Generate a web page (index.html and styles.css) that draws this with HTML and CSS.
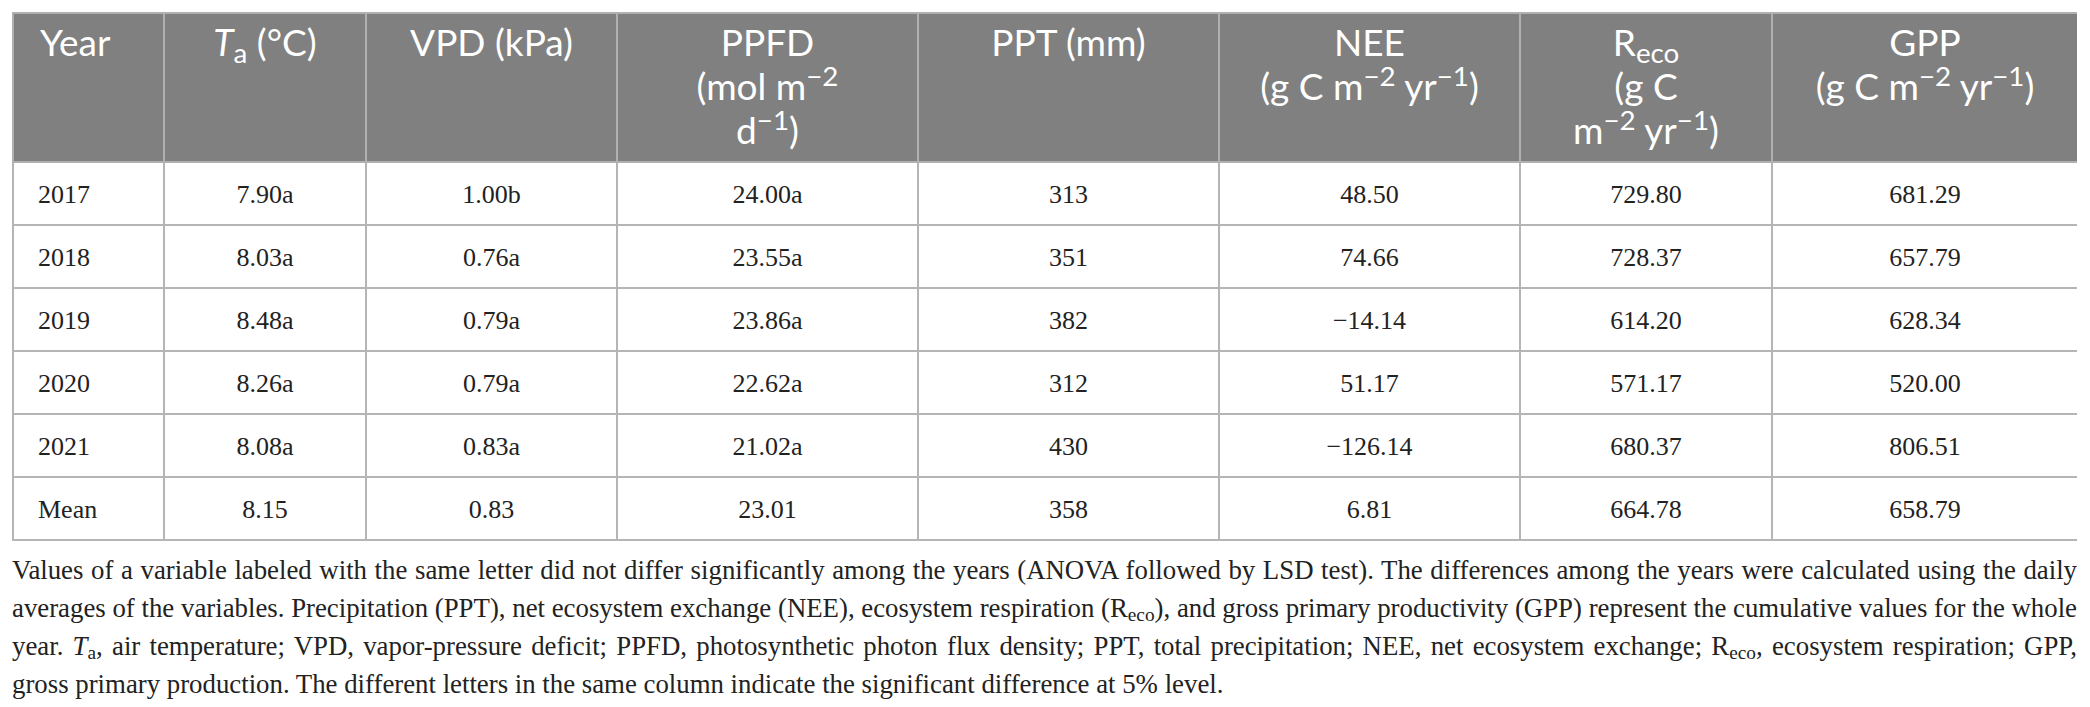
FILE: index.html
```html
<!DOCTYPE html>
<html>

<head>
    <title>Table 1</title>
    <link rel="stylesheet" href="styles.css">
</head>

<body>
    <table class="data-table">
        <colgroup>
            <col style="width: 151px">
            <col style="width: 202px">
            <col style="width: 251px">
            <col style="width: 301px">
            <col style="width: 301px">
            <col style="width: 301px">
            <col style="width: 252px">
            <col style="width: 306px">
        </colgroup>
        <thead>
            <tr>
                <th class="left">Year</th>
                <th><i>T</i><sub>a</sub> (°C)</th>
                <th>VPD (kPa)</th>
                <th>PPFD<br>(mol m<sup>−2</sup><br>d<sup>−1</sup>)</th>
                <th>PPT (mm)</th>
                <th>NEE<br>(g C m<sup>−2</sup> yr<sup>−1</sup>)</th>
                <th>R<sub>eco</sub><br>(g C<br>m<sup>−2</sup> yr<sup>−1</sup>)</th>
                <th>GPP<br>(g C m<sup>−2</sup> yr<sup>−1</sup>)</th>
            </tr>
        </thead>
        <tbody>
            <tr>
                <td class="left">2017</td>
                <td>7.90a</td>
                <td>1.00b</td>
                <td>24.00a</td>
                <td>313</td>
                <td>48.50</td>
                <td>729.80</td>
                <td>681.29</td>
            </tr>
            <tr>
                <td class="left">2018</td>
                <td>8.03a</td>
                <td>0.76a</td>
                <td>23.55a</td>
                <td>351</td>
                <td>74.66</td>
                <td>728.37</td>
                <td>657.79</td>
            </tr>
            <tr>
                <td class="left">2019</td>
                <td>8.48a</td>
                <td>0.79a</td>
                <td>23.86a</td>
                <td>382</td>
                <td>−14.14</td>
                <td>614.20</td>
                <td>628.34</td>
            </tr>
            <tr>
                <td class="left">2020</td>
                <td>8.26a</td>
                <td>0.79a</td>
                <td>22.62a</td>
                <td>312</td>
                <td>51.17</td>
                <td>571.17</td>
                <td>520.00</td>
            </tr>
            <tr>
                <td class="left">2021</td>
                <td>8.08a</td>
                <td>0.83a</td>
                <td>21.02a</td>
                <td>430</td>
                <td>−126.14</td>
                <td>680.37</td>
                <td>806.51</td>
            </tr>
            <tr>
                <td class="left">Mean</td>
                <td>8.15</td>
                <td>0.83</td>
                <td>23.01</td>
                <td>358</td>
                <td>6.81</td>
                <td>664.78</td>
                <td>658.79</td>
            </tr>
        </tbody>
    </table>

    <p class="caption">Values of a variable labeled with the same letter did not differ significantly among the years (ANOVA followed by LSD test). The differences among the years were calculated using the daily averages of the variables. Precipitation (PPT), net ecosystem exchange (NEE), ecosystem respiration (R<sub>eco</sub>), and gross primary productivity (GPP) represent the cumulative values for the whole year. <i>T</i><sub>a</sub>, air temperature; VPD, vapor-pressure deficit; PPFD, photosynthetic photon flux density; PPT, total precipitation; NEE, net ecosystem exchange; R<sub>eco</sub>, ecosystem respiration; GPP, gross primary production. The different letters in the same column indicate the significant difference at 5% level.</p>
</body>

</html>
```

FILE: styles.css
```css
body {
    margin: 12px 13px 0 12px;
    font-family: "Liberation Serif", "Times New Roman", serif;
    color: #222;
    background: #fff;
}

.data-table {
    width: 100%;
    border-collapse: collapse;
    table-layout: fixed;
    border: 2px solid #b5b5b5;
}

.data-table th {
    background-color: #808080;
    color: #fff;
    font-family: Lato, "Open Sans", sans-serif;
    font-weight: normal;
    font-size: 37px;
    line-height: 44px;
    text-align: center;
    vertical-align: top;
    white-space: nowrap;
    padding: 6px 20px 9px 20px;
    border: 2px solid #b0b0b0;
}

.data-table th.left {
    padding-left: 26px;
}

.data-table td {
    font-size: 26px;
    line-height: 37px;
    text-align: center;
    padding: 13px 24px 11px 24px;
    border: 2px solid #b5b5b5;
}

.data-table .left {
    text-align: left;
}

.data-table sup {
    font-size: 0.75em;
    line-height: 0;
    vertical-align: 0.5em;
}

.data-table sub {
    font-size: 0.75em;
    line-height: 0;
    vertical-align: -0.25em;
}

.caption {
    margin: 10px 0 0 0;
    font-size: 26.8px;
    line-height: 38px;
    text-align: justify;
}

.caption sub {
    font-size: 0.72em;
    line-height: 0;
    vertical-align: -0.2em;
}
```
